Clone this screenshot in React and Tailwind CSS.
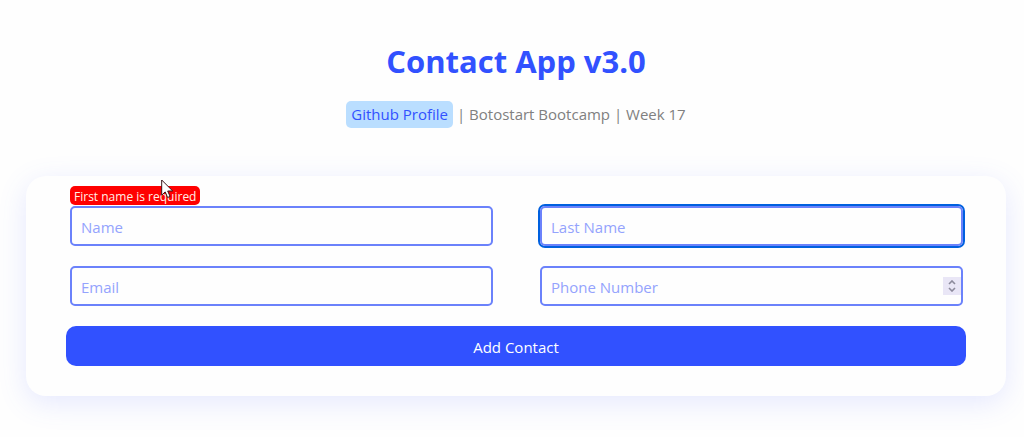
const inputClass =
  "block h-10 w-full rounded-[5px] border-2 border-[#6b82fb] bg-transparent px-[9px] pt-[2px] text-[15px] text-[#3151ff] placeholder:text-[#94a3fd] placeholder:opacity-100 outline-none";

function Field({ id, label, type = "text", error, className = "", children }) {
  return (
    <div className="relative">
      {error && (
        <p
          id={`${id}-error`}
          className="absolute bottom-full left-0 mb-px h-[19px] rounded-[5px] bg-[#ff0000] px-1 text-[12px] leading-[21px] whitespace-nowrap text-[#fff0e6]"
        >
          {error}
        </p>
      )}
      <input
        id={id}
        name={id}
        type={type}
        aria-label={label}
        aria-describedby={error ? `${id}-error` : undefined}
        placeholder={label}
        className={`${inputClass} ${className}`}
      />
      {children}
    </div>
  );
}

function Stepper() {
  return (
    <div className="absolute top-[11px] right-[2px] flex h-[18px] w-[18px] flex-col bg-[#e9e6f6] py-[2px] text-[#8c8a9c]">
      <button type="button" aria-label="Increase" className="flex flex-1 items-center justify-center">
        <svg width="8" height="5" viewBox="0 0 8 5" fill="none" stroke="currentColor" strokeWidth="1.6">
          <path d="M1 4 4 1l3 3" />
        </svg>
      </button>
      <button type="button" aria-label="Decrease" className="flex flex-1 items-center justify-center">
        <svg width="8" height="5" viewBox="0 0 8 5" fill="none" stroke="currentColor" strokeWidth="1.6">
          <path d="m1 1 3 3 3-3" />
        </svg>
      </button>
    </div>
  );
}

function Pointer() {
  return (
    <svg
      aria-hidden="true"
      className="pointer-events-none absolute top-[3px] left-[135px]"
      width="13"
      height="20"
      viewBox="0 0 13 20"
    >
      <path
        d="M.7 1v15.2l3.5-3.3 2.4 5.6 2.5-1.1-2.4-5.4h5L.7 1Z"
        fill="#fff"
        stroke="#3a1418"
        strokeWidth="1"
      />
    </svg>
  );
}

export default function App() {
  return (
    <div className="min-h-screen bg-[#fefefe] pt-10 pr-[18px] pb-10 pl-[26px] font-['Open_Sans','Noto_Sans',sans-serif]">
      <header className="flex flex-col items-center">
        <h1 className="text-[31px] leading-[42px] font-bold text-[#3151ff]">Contact App v3.0</h1>
        <p className="mt-[19px] text-[15px] leading-[27px] text-[#808080]">
          <a href="#profile" className="inline-block rounded-[5px] bg-[#badeff] px-[5px] text-[#3151ff]">
            Github Profile
          </a>{" "}
          | Botostart Bootcamp | Week 17
        </p>
      </header>

      <main className="relative mt-12 rounded-[20px] bg-[#fefefe] px-10 pt-[30px] pb-[30px] shadow-[0_7px_29px_0_rgba(90,105,255,0.15)]">
        <form>
          <div className="grid grid-cols-2 gap-x-[47px] gap-y-5 pr-[3px] pl-1">
            <Field id="name" label="Name" error="First name is required" />
            <Field
              id="lastName"
              label="Last Name"
              className="shadow-[0_0_0_2px_#0060df]"
            />
            <Field id="email" label="Email" type="email" />
            <Field
              id="phone"
              label="Phone Number"
              type="number"
              className="[appearance:textfield]"
            >
              <Stepper />
            </Field>
          </div>
          <button type="submit" className="mt-5 h-10 w-full rounded-[10px] bg-[#3151ff] pt-[2px] text-[15px] text-white">
            Add Contact
          </button>
        </form>
        <Pointer />
      </main>
    </div>
  );
}
